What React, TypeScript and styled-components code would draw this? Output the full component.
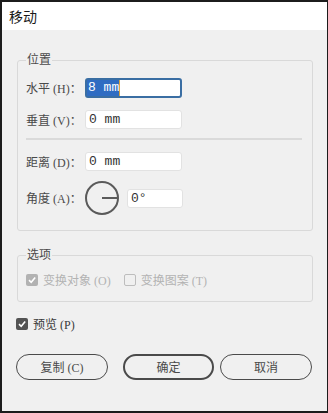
import styled, { createGlobalStyle } from 'styled-components';

const GlobalStyle = createGlobalStyle`
  html, body {
    margin: 0;
    padding: 0;
    background: #f0f0f0;
  }
  * {
    box-sizing: border-box;
  }
`;

// latin parts of the labels are serif in the reference, han glyphs fall through to Noto
const UI_FONT = `"Liberation Serif", "Noto Sans CJK SC", serif`;

const Frame = styled.div`
  width: 328px;
  height: 413px;
  border-style: solid;
  border-color: #1c1c1c;
  border-width: 2px 1px 2px 2px;
  background: #f0f0f0;
  display: flex;
  flex-direction: column;
  font-family: ${UI_FONT};
  color: #4a4a4a;
`;

const TitleBar = styled.div`
  height: 28px;
  flex: none;
  background: #fff;
  display: flex;
  align-items: center;
  padding-left: 7px;
  font-size: 14px;
  color: #1a1a1a;
`;

const Body = styled.div`
  flex: 1;
  padding: 0 14px;
  display: flex;
  flex-direction: column;
`;

const Group = styled.fieldset<{ $top: number; $bottom: number }>`
  margin: ${(p) => p.$top}px 0 0 1px;
  min-width: 0;
  border: 1px solid #d9d9d9;
  border-radius: 3px;
  padding: 10px 10px ${(p) => p.$bottom}px 8px;
`;

const Legend = styled.legend`
  padding: 0 1px;
  font-size: 12px;
  line-height: 16px;
  color: #4a4a4a;
`;

const Row = styled.div<{ $gap?: number }>`
  display: flex;
  align-items: center;
  margin-top: ${(p) => p.$gap ?? 0}px;
`;

const Label = styled.span`
  width: 59px;
  flex: none;
  font-size: 12px;
  white-space: nowrap;
  color: #4a4a4a;
`;

const Field = styled.div<{ $w: number; $focus?: boolean }>`
  width: ${(p) => p.$w}px;
  height: ${(p) => (p.$focus ? 20 : 19)}px;
  background: #fff;
  border: ${(p) => (p.$focus ? '2px solid #3a6ea3' : '1px solid #e2e2e2')};
  border-radius: 3px;
  display: flex;
  align-items: center;
  padding-left: ${(p) => (p.$focus ? 0 : 3)}px;
  font-family: "Liberation Mono", monospace;
  font-size: 13px;
  color: #333;
`;

const Selected = styled.span`
  background: #2f6cc2;
  color: #fff;
  height: 16px;
  line-height: 16px;
  padding-left: 1px;
  border-right: 1px solid #d9a441;
`;

const Divider = styled.div`
  height: 2px;
  background: #dadada;
  margin: 9px 0 12px 0;
`;

const Dial = styled.svg`
  flex: none;
  margin-right: 8px;
`;

const CheckRow = styled.div<{ $top?: number }>`
  display: flex;
  align-items: center;
  height: 14px;
  margin-top: ${(p) => p.$top ?? 0}px;
`;

const CheckItem = styled.span<{ $disabled?: boolean; $space?: number }>`
  display: flex;
  align-items: center;
  gap: 5px;
  margin-right: ${(p) => p.$space ?? 0}px;
  font-size: 12px;
  white-space: nowrap;
  color: ${(p) => (p.$disabled ? '#b3b3b3' : '#3a3a3a')};
`;

const Box = styled.span<{ $checked?: boolean; $disabled?: boolean }>`
  width: 12px;
  height: 12px;
  flex: none;
  border-radius: 2px;
  display: flex;
  align-items: center;
  justify-content: center;
  background: ${(p) =>
    p.$checked ? (p.$disabled ? '#b2b2b2' : '#535353') : 'transparent'};
  border: 1px solid
    ${(p) => (p.$checked ? 'transparent' : p.$disabled ? '#bdbdbd' : '#555')};
`;

const Buttons = styled.div`
  display: flex;
  margin-top: 23px;
`;

const Pill = styled.div<{ $primary?: boolean; $left: number; $w: number }>`
  width: ${(p) => p.$w}px;
  height: 26px;
  margin-left: ${(p) => p.$left}px;
  border: ${(p) => (p.$primary ? '2px' : '1px')} solid #4a4a4a;
  border-radius: 13px;
  display: flex;
  align-items: center;
  justify-content: center;
  font-size: 12px;
  color: #4a4a4a;
`;

const Check = ({ checked, disabled }: { checked?: boolean; disabled?: boolean }) => (
  <Box $checked={checked} $disabled={disabled}>
    {checked && (
      <svg width='10' height='10' viewBox='0 0 10 10'>
        <path d='M2 5.2 L4.2 7.3 L8.2 2.6' fill='none' stroke='#fff' strokeWidth='1.6' />
      </svg>
    )}
  </Box>
);

export default function App() {
  return (
    <>
      <GlobalStyle />
      <Frame>
        <TitleBar>移动</TitleBar>
        <Body>
          <Group $top={22} $bottom={15}>
            <Legend>位置</Legend>
            <Row>
              <Label>水平 (H)：</Label>
              <Field $w={97} $focus>
                <Selected>8 mm</Selected>
              </Field>
            </Row>
            <Row $gap={12}>
              <Label>垂直 (V)：</Label>
              <Field $w={97}>0 mm</Field>
            </Row>
            <Divider />
            <Row>
              <Label>距离 (D)：</Label>
              <Field $w={97}>0 mm</Field>
            </Row>
            <Row $gap={10}>
              <Label>角度 (A)：</Label>
              <Dial width='34' height='34' viewBox='0 0 34 34'>
                <circle cx='17' cy='17' r='16' fill='none' stroke='#5a5a5a' strokeWidth='2' />
                <line x1='17' y1='17' x2='33' y2='17' stroke='#5a5a5a' strokeWidth='2' />
              </Dial>
              <Field $w={56}>0°</Field>
            </Row>
          </Group>

          <Group $top={16} $bottom={14}>
            <Legend>选项</Legend>
            <CheckRow>
              <CheckItem $disabled $space={13}>
                <Check checked disabled />
                变换对象 (O)
              </CheckItem>
              <CheckItem $disabled>
                <Check disabled />
                变换图案 (T)
              </CheckItem>
            </CheckRow>
          </Group>

          <CheckRow $top={15}>
            <CheckItem>
              <Check checked />
              预览 (P)
            </CheckItem>
          </CheckRow>

          <Buttons>
            <Pill $left={0} $w={92}>复制 (C)</Pill>
            <Pill $left={15} $w={91} $primary>确定</Pill>
            <Pill $left={6} $w={92}>取消</Pill>
          </Buttons>
        </Body>
      </Frame>
    </>
  );
}
